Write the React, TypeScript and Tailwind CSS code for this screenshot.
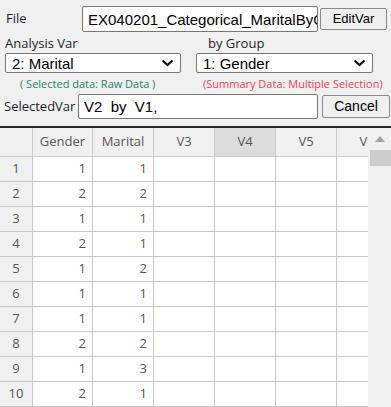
import React from 'react';

const rows: [number, number][] = [
  [1, 1], [2, 2], [1, 1], [2, 1], [1, 2], [1, 1], [1, 1], [2, 2], [1, 3], [2, 1],
];

const cols = ['V3', 'V4', 'V5', 'V6'];

function Chevron() {
  return (
    <svg width="13" height="8" viewBox="0 0 13 8" className="shrink-0">
      <polyline points="1.5,1.5 6.5,6 11.5,1.5" fill="none" stroke="#111" strokeWidth="2.2" />
    </svg>
  );
}

function Select({ value, className }: { value: string; className: string }) {
  return (
    <div className={`h-[20px] bg-white border border-[#767676] rounded-[2px] flex items-center justify-between pl-[6px] pr-[6px] text-[15px] text-black ${className}`}>
      <span className="leading-none">{value}</span>
      <Chevron />
    </div>
  );
}

export default function App() {
  return (
    <div className="w-[391px] h-[407px] bg-[#f0f0f0] overflow-hidden flex flex-col font-['Liberation_Sans',Arial,sans-serif]">
      {/* File row */}
      <div className="flex items-center mt-[6px] h-[26px]">
        <span className="w-[82px] pl-[6px] text-[13px] text-[#1e1e2a] font-['Open_Sans',sans-serif]">File</span>
        <input
          readOnly
          value="EX040201_Categorical_MaritalByGender"
          className="w-[236px] h-[26px] bg-white border border-[#767676] rounded-[2px] pl-[5px] text-[15px] text-black outline-none"
        />
        <button className="ml-[2px] w-[67px] h-[22px] bg-[#efefef] border border-[#8a8a8a] rounded-[2px] text-[13px] text-black">EditVar</button>
      </div>

      {/* labels */}
      <div className="flex items-end h-[21px] font-['Open_Sans',sans-serif] text-[13px] text-[#1e1e2a] leading-none pb-[3px]">
        <span className="ml-[5px] w-[203px]">Analysis Var</span>
        <span>by Group</span>
      </div>

      {/* selects */}
      <div className="flex">
        <Select value="2: Marital" className="ml-[5px] w-[176px]" />
        <Select value="1: Gender" className="ml-[15px] w-[177px]" />
      </div>

      {/* notes */}
      <div className="flex items-center h-[21px] font-['Open_Sans',sans-serif] text-[11px] leading-none">
        <span className="ml-[20px] w-[183px] text-[#17876a]">( Selected data: Raw Data )</span>
        <span className="text-[#f2405a]">(Summary Data: Multiple Selection)</span>
      </div>

      {/* selected var row */}
      <div className="flex items-center h-[25px]">
        <span className="w-[78px] pl-[4px] text-[13px] text-[#1e1e2a] font-['Open_Sans',sans-serif]">SelectedVar</span>
        <input
          readOnly
          value="V2  by  V1,"
          className="w-[240px] h-[25px] bg-white border border-[#767676] rounded-[2px] pl-[5px] text-[15px] text-black outline-none"
        />
        <button className="ml-[4px] w-[68px] h-[23px] bg-[#efefef] border border-[#8a8a8a] rounded-[2px] text-[14px] text-black">Cancel</button>
      </div>

      {/* grid */}
      <div className="mt-[7px] border-t-2 border-[#2a2a2a] flex flex-1 min-h-0 font-['Open_Sans',sans-serif] text-[13px] text-[#555]">
        <div className="w-[368px] overflow-hidden bg-white">
          <div className="flex h-[29px] border-b border-[#c8c8c8] bg-[#f0f0f0] whitespace-nowrap">
            <div className="w-[33px] shrink-0 border-r border-[#c8c8c8]" />
            <div className="w-[60px] shrink-0 border-r border-[#c8c8c8] flex items-center justify-center">Gender</div>
            <div className="w-[61px] shrink-0 border-r border-[#c8c8c8] flex items-center justify-center">Marital</div>
            {cols.map((c) => (
              <div
                key={c}
                className={`w-[61px] shrink-0 border-r border-[#c8c8c8] flex items-center justify-center ${c === 'V4' ? 'bg-[#dcdcdc]' : ''}`}
              >
                {c}
              </div>
            ))}
          </div>
          {rows.map(([g, m], i) => (
            <div key={i} className="flex h-[25px] border-b border-[#c8c8c8] whitespace-nowrap">
              <div className="w-[33px] shrink-0 border-r border-[#c8c8c8] bg-[#f0f0f0] flex items-center justify-center">{i + 1}</div>
              <div className="w-[60px] shrink-0 border-r border-[#c8c8c8] flex items-center justify-end pr-[6px]">{g}</div>
              <div className="w-[61px] shrink-0 border-r border-[#c8c8c8] flex items-center justify-end pr-[6px]">{m}</div>
              {cols.map((c) => (
                <div key={c} className="w-[61px] shrink-0 border-r border-[#c8c8c8]" />
              ))}
            </div>
          ))}
        </div>
        {/* scrollbar */}
        <div className="flex-1 bg-[#f0f0f0] flex flex-col items-start pl-[2px]">
          <div className="h-[22px] w-full flex items-center justify-center pr-[2px]">
            <svg width="10" height="6" viewBox="0 0 10 6">
              <polygon points="0,6 5,0 10,6" fill="#a3a3a3" />
            </svg>
          </div>
          <div className="w-full h-[16px] bg-[#cdcdcd]" />
        </div>
      </div>
    </div>
  );
}
